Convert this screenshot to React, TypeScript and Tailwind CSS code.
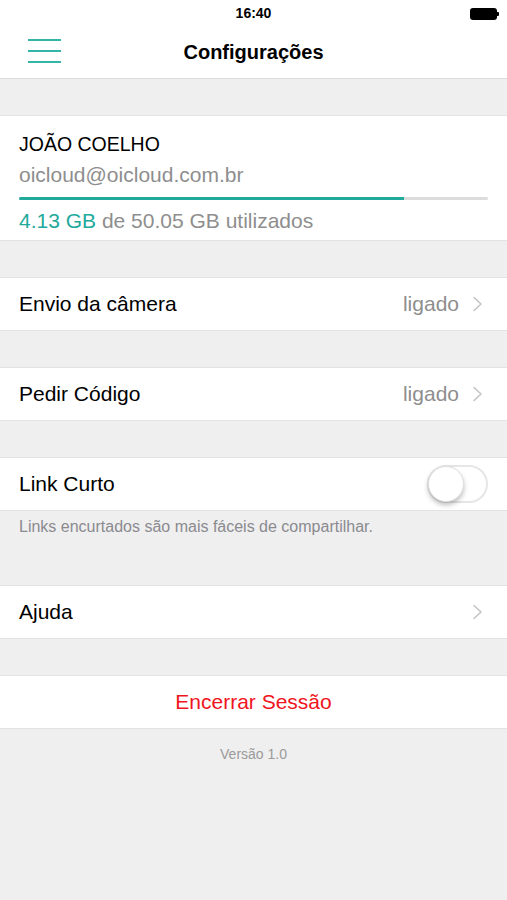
import React, { useState } from 'react';

const Chevron = () => (
  <svg width="11" height="16" viewBox="0 0 11 16" className="shrink-0">
    <polyline points="2,1.5 9,8 2,14.5" fill="none" stroke="#c4c4c8" strokeWidth="1.6" strokeLinecap="round" strokeLinejoin="round" />
  </svg>
);

const Row = ({ label, value, chevron = true }: { label: string; value?: string; chevron?: boolean }) => (
  <div className="h-[54px] bg-white border-y border-[#e2e2e2] flex items-center pl-[19px] pr-[24px]">
    <span className="text-[21px] text-black flex-1">{label}</span>
    {value && <span className="text-[21px] text-[#8e8e8e] mr-[13px]">{value}</span>}
    {chevron && <Chevron />}
  </div>
);

const Toggle = ({ on, onChange }: { on: boolean; onChange: () => void }) => (
  <button
    onClick={onChange}
    className={`relative w-[61px] h-[38px] rounded-full border-2 ${on ? 'bg-[#21a99b] border-[#21a99b]' : 'bg-white border-[#e6e6e6]'}`}
  >
    <span
      className={`absolute top-[-1px] w-[36px] h-[36px] rounded-full bg-white shadow-[0_3px_5px_rgba(0,0,0,0.25)] border border-[#e0e0e0] ${on ? 'left-[22px]' : 'left-[-1px]'}`}
    />
  </button>
);

export default function App() {
  const [shortLink, setShortLink] = useState(false);
  const used = 4.13;
  const total = 50.05;

  return (
    <div className="w-[507px] min-h-[900px] bg-[#efefef] font-['Liberation_Sans',Arial,sans-serif]">
      {/* status bar */}
      <div className="h-[26px] bg-white flex items-center justify-center relative">
        <span className="text-[14px] font-semibold text-black">16:40</span>
        <div className="absolute right-[8px] top-[8px] flex items-center">
          <div className="w-[27px] h-[12px] rounded-[3px] bg-black" />
          <div className="w-[2px] h-[4px] bg-black rounded-r-[1px]" />
        </div>
      </div>

      {/* nav bar */}
      <div className="h-[53px] bg-white border-b border-[#dcdcdc] flex items-center relative">
        <button className="absolute left-[28px] top-[13px] flex flex-col gap-[9px]">
          <span className="block w-[33px] h-[2px] bg-[#33b5a8]" />
          <span className="block w-[33px] h-[2px] bg-[#33b5a8]" />
          <span className="block w-[33px] h-[2px] bg-[#33b5a8]" />
        </button>
        <h1 className="w-full text-center text-[20px] font-semibold text-black">Configurações</h1>
      </div>

      <div className="h-[36px]" />

      {/* account card */}
      <div className="bg-white border-y border-[#e2e2e2] pt-[16px] pb-[7px] pl-[19px] pr-[19px]">
        <div className="text-[19.5px] leading-[24px] text-black">JOÃO COELHO</div>
        <div className="mt-[7px] text-[21px] leading-[24px] text-[#8e8e8e]">oicloud@oicloud.com.br</div>
        <div className="mt-[10px] h-[3px] bg-[#dcdcdc] rounded-full overflow-hidden">
          <div className="h-full w-[82%] bg-[#21a99b]" />
        </div>
        <div className="mt-[9px] text-[21px] leading-[24px] text-[#8e8e8e]">
          <span className="text-[#21a99b]">{used.toFixed(2)} GB</span> de {total.toFixed(2)} GB utilizados
        </div>
      </div>

      <div className="h-[36px]" />
      <Row label="Envio da câmera" value="ligado" />
      <div className="h-[36px]" />
      <Row label="Pedir Código" value="ligado" />
      <div className="h-[36px]" />

      <div className="h-[54px] bg-white border-y border-[#e2e2e2] flex items-center pl-[19px] pr-[19px]">
        <span className="text-[21px] text-black flex-1">Link Curto</span>
        <Toggle on={shortLink} onChange={() => setShortLink(!shortLink)} />
      </div>
      <p className="pt-[6px] pl-[19px] text-[16px] leading-[20px] text-[#8a8a8f]">
        Links encurtados são mais fáceis de compartilhar.
      </p>

      <div className="h-[48px]" />
      <Row label="Ajuda" />
      <div className="h-[36px]" />

      <button className="w-full h-[54px] bg-white border-y border-[#e2e2e2] flex items-center justify-center">
        <span className="text-[21px] text-[#f0141e]">Encerrar Sessão</span>
      </button>

      <p className="mt-[16px] text-center text-[14px] leading-[18px] text-[#9a9a9a]">Versão 1.0</p>
    </div>
  );
}
